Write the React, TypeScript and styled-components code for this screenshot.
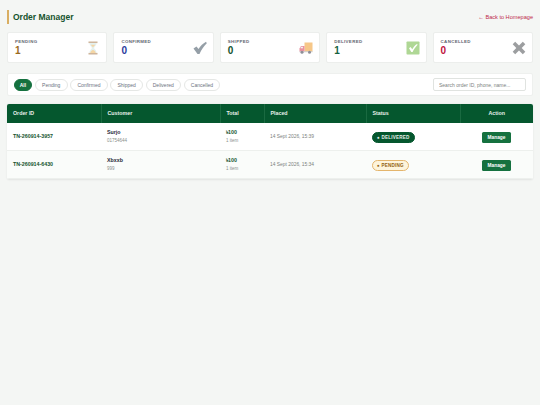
import styled, { createGlobalStyle } from "styled-components";

const Global = createGlobalStyle`
  html, body { margin: 0; padding: 0; background: #f4f6f4; }
  body { font-family: "Liberation Sans", Arial, sans-serif; }
`;

const Page = styled.div`
  width: 540px;
  height: 405px;
  box-sizing: border-box;
  padding: 10px 7px 0 7px;
  overflow: hidden;
`;

const TopBar = styled.div`
  display: flex;
  align-items: center;
  justify-content: space-between;
  height: 14px;
  margin-bottom: 8px;
`;

const Title = styled.h1`
  margin: 0;
  padding-left: 4px;
  border-left: 2px solid #d9ae62;
  font-size: 8.5px;
  line-height: 14px;
  font-weight: 700;
  color: #14532d;
`;

const BackLink = styled.a`
  font-size: 5.6px;
  color: #be2a4c;
  text-decoration: none;
`;

const Stats = styled.div`
  display: grid;
  grid-template-columns: repeat(5, 1fr);
  gap: 6px;
  margin-bottom: 10px;
`;

const StatCard = styled.div`
  height: 31px;
  box-sizing: border-box;
  padding: 6px 6px 0 7px;
  display: flex;
  justify-content: space-between;
  background: #fff;
  border: 0.5px solid #eceeec;
  border-radius: 2px;
`;

const StatLabel = styled.div`
  font-size: 4.4px;
  line-height: 6px;
  font-weight: 700;
  letter-spacing: 0.35px;
  color: #5f6670;
`;

const StatValue = styled.div<{ $color: string }>`
  font-size: 10px;
  line-height: 11px;
  font-weight: 700;
  color: ${(p) => p.$color};
`;

const StatIcon = styled.svg`
  width: 14px;
  height: 14px;
  margin-top: 2px;
  opacity: 0.55;
`;

const FilterBar = styled.div`
  height: 23px;
  box-sizing: border-box;
  display: flex;
  align-items: center;
  justify-content: space-between;
  padding: 0 6px 0 5.5px;
  background: #fff;
  border: 0.5px solid #eef0ee;
  border-radius: 2px;
  margin-bottom: 8px;
`;

const Pills = styled.div`
  display: flex;
  gap: 2.6px;
`;

const Pill = styled.button<{ $active?: boolean }>`
  height: 12px;
  padding: 0 ${(p) => (p.$active ? 5.2 : 6.2)}px;
  font: ${(p) => (p.$active ? 700 : 400)} 5px "Liberation Sans", sans-serif;
  border-radius: 6px;
  border: 0.5px solid ${(p) => (p.$active ? "#15713f" : "#e5e7e5")};
  background: ${(p) => (p.$active ? "#15713f" : "#fff")};
  color: ${(p) => (p.$active ? "#fff" : "#6b7280")};
`;

const Search = styled.input`
  width: 93px;
  height: 13.5px;
  box-sizing: border-box;
  padding: 0 5px;
  font: 400 5px "Liberation Sans", sans-serif;
  border: 0.5px solid #e0e3e0;
  border-radius: 2px;
  background: #fff;
  outline: none;
  &::placeholder { color: #7b8280; }
`;

const Card = styled.div`
  background: #fff;
  border-radius: 2px;
  overflow: hidden;
  box-shadow: 0 0.5px 2px rgba(0, 0, 0, 0.08);
`;

const Table = styled.table`
  width: 526px;
  border-collapse: collapse;
  table-layout: fixed;
`;

const Th = styled.th<{ $w: number; $center?: boolean }>`
  width: ${(p) => p.$w}px;
  height: 18.5px;
  padding: 0 6px;
  box-sizing: border-box;
  background: #05572e;
  color: #e6efe9;
  font-size: 5.3px;
  font-weight: 700;
  text-align: ${(p) => (p.$center ? "center" : "left")};
  border-right: 0.5px solid #1a6a41;
  &:last-child { border-right: 0; }
`;

const Row = styled.tr<{ $alt?: boolean }>`
  height: 28px;
  background: ${(p) => (p.$alt ? "#fafcfa" : "#fff")};
  border-bottom: 0.5px solid #edf0ed;
`;

const Td = styled.td<{ $center?: boolean }>`
  padding: 0 6px;
  box-sizing: border-box;
  vertical-align: middle;
  text-align: ${(p) => (p.$center ? "center" : "left")};
`;

const OrderId = styled.span`
  display: block;
  font-size: 5.3px;
  line-height: 7px;
  font-weight: 700;
  color: #14532d;
`;

const Primary = styled.div<{ $color: string }>`
  font-size: 5.3px;
  line-height: 7px;
  font-weight: 700;
  color: ${(p) => p.$color};
  margin-bottom: 2.5px;
`;

const Secondary = styled.div`
  font-size: 4.5px;
  line-height: 6px;
  color: #8a908c;
`;

const Placed = styled.span`
  display: block;
  font-size: 4.9px;
  line-height: 7px;
  color: #7b817d;
`;

const Badge = styled.span<{ $kind: "delivered" | "pending" }>`
  display: inline-block;
  height: 11px;
  line-height: 10px;
  vertical-align: middle;
  box-sizing: border-box;
  padding: 0 4px;
  font-size: 4.6px;
  font-weight: 700;
  letter-spacing: 0.2px;
  border-radius: 6px;
  color: ${(p) => (p.$kind === "delivered" ? "#e6efe9" : "#92610e")};
  background: ${(p) => (p.$kind === "delivered" ? "#05572e" : "#fdf4dc")};
  border: 0.5px solid ${(p) => (p.$kind === "delivered" ? "#05572e" : "#e4b56c")};
`;

const Manage = styled.button`
  display: inline-block;
  vertical-align: middle;
  width: 29px;
  height: 11px;
  padding: 0;
  border: 0;
  border-radius: 1.5px;
  background: #15713f;
  color: #fff;
  font: 700 4.8px "Liberation Sans", sans-serif;
`;

const Hourglass = () => (
  <StatIcon viewBox="0 0 14 14">
    <rect x="2.5" y="0.5" width="9" height="1.6" fill="#a8794a" />
    <rect x="2.5" y="11.9" width="9" height="1.6" fill="#a8794a" />
    <path d="M3.5 2.1h7c0 3-2.3 3.600-2.300 4.900s2.300 1.900 2.300 4.900h-7c0-3 2.300-3.600 2.300-4.900S3.500 5.100 3.500 2.100z" fill="#cfe6e2" />
    <path d="M4.800 3.800h4.400c-.5 1.300-2.200 1.700-2.200 2.900 0-1.200-1.700-1.600-2.200-2.900zM4.200 11.900c.3-2 2-2.600 2.800-3.200.8.6 2.500 1.200 2.800 3.200z" fill="#eeb65c" />
  </StatIcon>
);

const Check = () => (
  <StatIcon viewBox="0 0 14 14">
    <path d="M0.500 7.500L3.500 5.500 5.500 8C7.500 5 10 2.500 13 0.800L13.800 2.200C11 5 8.500 8.500 6.500 13H4.500z" fill="#3f5260" />
  </StatIcon>
);

const Truck = () => (
  <StatIcon viewBox="0 0 14 14">
    <rect x="5.500" y="1.500" width="8" height="9" fill="#f09a28" />
    <path d="M0.500 10.500V7.500L2 5H5.500v5.500z" fill="#d93a52" />
    <rect x="1.700" y="5.800" width="2.200" height="1.500" fill="#e8eef0" />
    <rect x="0.500" y="10.300" width="13" height="0.900" fill="#999" />
    <circle cx="3" cy="11.300" r="1.500" fill="#334" />
    <circle cx="10.500" cy="11.300" r="1.500" fill="#334" />
  </StatIcon>
);

const CheckBox = () => (
  <StatIcon viewBox="0 0 14 14">
    <rect x="0.500" y="0.500" width="13" height="13" rx="0.800" fill="#6fb83f" />
    <path d="M3 7.200l1.500-1.300 1.800 2.400C7.500 6 9 4.200 11 3l.6.700C9.500 5.800 7.800 8.400 6.600 11H5.300z" fill="#fff" />
  </StatIcon>
);

const Cross = () => (
  <StatIcon viewBox="0 0 14 14">
    <path d="M3.200 0.800L7 4.400l3.800-3.600 2.500 2.500L9.700 7l3.600 3.800-2.500 2.500L7 9.600l-3.800 3.700-2.500-2.500L4.300 7 .7 3.300z" fill="#4d5054" />
  </StatIcon>
);

const stats = [
  { label: "PENDING", value: 1, color: "#9a6a1c", icon: <Hourglass /> },
  { label: "CONFIRMED", value: 0, color: "#2a3a9c", icon: <Check /> },
  { label: "SHIPPED", value: 0, color: "#14532d", icon: <Truck /> },
  { label: "DELIVERED", value: 1, color: "#14633f", icon: <CheckBox /> },
  { label: "CANCELLED", value: 0, color: "#be123c", icon: <Cross /> },
];

const filters = ["All", "Pending", "Confirmed", "Shipped", "Delivered", "Cancelled"];

const orders = [
  { id: "TN-260914-3957", name: "Surjo", phone: "01754644", placed: "14 Sept 2026, 15:39", status: "delivered" as const },
  { id: "TN-260914-6430", name: "Xbxxb", phone: "999", placed: "14 Sept 2026, 15:34", status: "pending" as const },
];

export default function App() {
  return (
    <Page>
      <Global />
      <TopBar>
        <Title>Order Manager</Title>
        <BackLink href="#">← Back to Homepage</BackLink>
      </TopBar>
      <Stats>
        {stats.map((s) => (
          <StatCard key={s.label}>
            <div>
              <StatLabel>{s.label}</StatLabel>
              <StatValue $color={s.color}>{s.value}</StatValue>
            </div>
            {s.icon}
          </StatCard>
        ))}
      </Stats>
      <FilterBar>
        <Pills>
          {filters.map((f, i) => (
            <Pill key={f} $active={i === 0}>{f}</Pill>
          ))}
        </Pills>
        <Search placeholder="Search order ID, phone, name..." />
      </FilterBar>
      <Card>
        <Table>
          <thead>
            <tr>
              <Th $w={94}>Order ID</Th>
              <Th $w={119}>Customer</Th>
              <Th $w={44}>Total</Th>
              <Th $w={102}>Placed</Th>
              <Th $w={94}>Status</Th>
              <Th $w={73} $center>Action</Th>
            </tr>
          </thead>
          <tbody>
            {orders.map((o, i) => (
              <Row key={o.id} $alt={i === 1}>
                <Td><OrderId>{o.id}</OrderId></Td>
                <Td>
                  <Primary $color="#1f2937">{o.name}</Primary>
                  <Secondary>{o.phone}</Secondary>
                </Td>
                <Td>
                  <Primary $color="#14532d">৳100</Primary>
                  <Secondary>1 item</Secondary>
                </Td>
                <Td><Placed>{o.placed}</Placed></Td>
                <Td>
                  <Badge $kind={o.status}>● {o.status.toUpperCase()}</Badge>
                </Td>
                <Td $center><Manage>Manage</Manage></Td>
              </Row>
            ))}
          </tbody>
        </Table>
      </Card>
    </Page>
  );
}
